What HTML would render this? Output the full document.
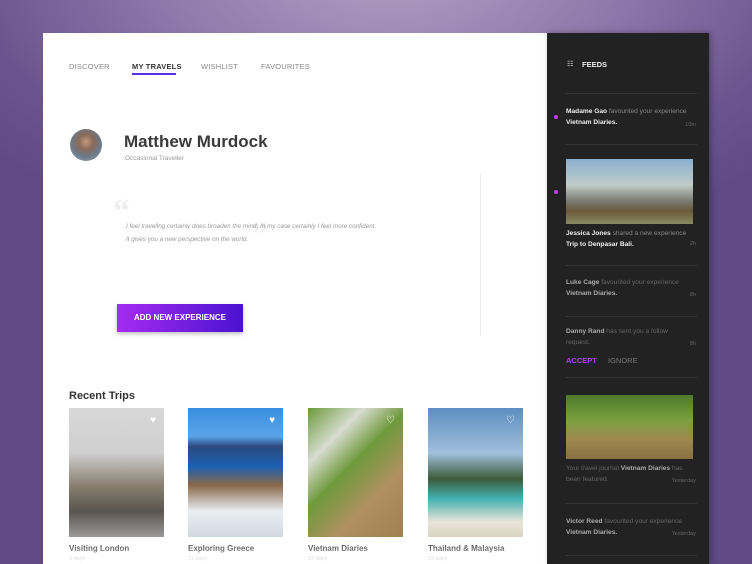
<!DOCTYPE html>
<html><head><meta charset="utf-8"><style>
*{margin:0;padding:0;box-sizing:border-box}
body{width:752px;height:564px;overflow:hidden;position:relative;font-family:"Liberation Sans",sans-serif;
background:radial-gradient(ellipse 520px 300px at 390px -40px,#b4a2c6 0%,#8e79ab 45%,#6a5590 80%,#5f4a86 100%);}
.main{position:absolute;left:43px;top:33px;width:504px;height:531px;background:#fff;}
.nav{position:absolute;top:29px;font-size:7.5px;color:#888;letter-spacing:.2px}
.feed{position:absolute;left:547px;top:33px;width:162px;height:531px;background:#222;box-shadow:2px 0 6px rgba(0,0,0,.3)}
.abs{position:absolute}
.div{position:absolute;left:18px;width:132px;height:1px;background:#333}
.ft{position:absolute;left:19px;font-size:6.6px;line-height:11px;color:#888;width:132px}
.ft b{color:#eee}
.tm{position:absolute;right:13px;font-size:5.5px;color:#666}
.dot{position:absolute;left:7px;width:4px;height:4px;border-radius:50%;background:#c23cf5}
.card{position:absolute;top:408px;width:95px;height:129px}
.ct{position:absolute;top:544px;font-size:8px;font-weight:bold;color:#333}
.cd{position:absolute;top:556px;font-size:5.5px;color:#aaa}
.heart{position:absolute;right:8px;top:7px;color:#fff;font-size:10px}
</style></head><body>
<div class="main">
 <div class="nav" style="left:26px">DISCOVER</div>
 <div class="nav" style="left:89px;color:#333;font-weight:bold">MY TRAVELS</div>
 <div class="abs" style="left:89px;top:40px;width:44px;height:2px;background:#5a2be0"></div>
 <div class="nav" style="left:158px">WISHLIST</div>
 <div class="nav" style="left:218px">FAVOURITES</div>
 <div class="abs" style="left:27px;top:96px;width:32px;height:32px;border-radius:50%;background:radial-gradient(circle at 50% 40%,#c49a80 0,#8a6a58 30%,#6c7a8a 60%,#9aa8b8 100%)"></div>
 <div class="abs" style="left:81px;top:99px;font-size:17px;font-weight:bold;color:#3a3a3a">Matthew Murdock</div>
 <div class="abs" style="left:82px;top:122px;font-size:6.5px;color:#999">Occasional Traveller</div>
 <div class="abs" style="left:437px;top:140px;width:1px;height:163px;background:#eee"></div>
 <div class="abs" style="left:70px;top:160px;font-size:34px;color:#eee;font-family:'Liberation Serif',serif;font-weight:bold">“</div>
 <div class="abs" style="left:208px;top:183px;font-size:34px;color:#eee;font-family:'Liberation Serif',serif;font-weight:bold">”</div>
 <div class="abs" style="left:83px;top:188px;font-size:6.3px;line-height:12.5px;color:#999;font-style:italic">I feel traveling certainly does broaden the mind. In my case certainly I feel more confident.<br>It gives you a new perspective on the world.</div>
 <div class="abs" style="left:74px;top:271px;width:126px;height:28px;background:linear-gradient(90deg,#a52cf0,#4a12d0);box-shadow:0 2px 4px rgba(0,0,0,.25);color:#fff;font-size:8px;font-weight:bold;text-align:center;line-height:28px">ADD NEW EXPERIENCE</div>
 <div class="abs" style="left:26px;top:357px;font-size:11px;font-weight:bold;color:#333">Recent Trips</div>
</div>
<div class="card" style="left:69px;background:linear-gradient(180deg,#d8d8d8 0,#cfcfcf 35%,#8a8070 60%,#5a5550 80%,#9a9a9a 100%)"><span class="heart">♥</span></div>
<div class="card" style="left:188px;background:linear-gradient(180deg,#3a8ee0 0,#5aa4e8 22%,#2c4a80 30%,#1a5fb0 45%,#8a6a4a 60%,#e8eef4 80%,#d0d8e0 100%)"><span class="heart">♥</span></div>
<div class="card" style="left:308px;background:linear-gradient(135deg,#6a9a3a 0,#d8dcd0 25%,#6f9a3c 45%,#b09060 70%,#a08050 100%)"><span class="heart">♡</span></div>
<div class="card" style="left:428px;background:linear-gradient(180deg,#5d8ec0 0,#a0c0dc 35%,#3e5a3a 55%,#40b0b0 70%,#e8e4d8 88%,#dcd4c4 100%)"><span class="heart">♡</span></div>
<div class="ct" style="left:69px">Visiting London</div><div class="cd" style="left:69px">5 days</div>
<div class="ct" style="left:188px">Exploring Greece</div><div class="cd" style="left:188px">11 days</div>
<div class="ct" style="left:308px">Vietnam Diaries</div><div class="cd" style="left:308px">15 days</div>
<div class="ct" style="left:428px">Thailand &amp; Malaysia</div><div class="cd" style="left:428px">19 days</div>
<div class="abs" style="left:43px;top:540px;width:504px;height:24px;background:linear-gradient(180deg,rgba(255,255,255,0),rgba(255,255,255,.8))"></div>

<div class="feed">
 <div class="abs" style="left:20px;top:27px;color:#eee;font-size:7px">☷</div>
 <div class="abs" style="left:35px;top:27px;color:#eee;font-size:7.5px;font-weight:bold">FEEDS</div>
 <div class="div" style="top:60px"></div>
 <div class="dot" style="top:82px"></div>
 <div class="ft" style="top:73px"><b>Madame Gao</b> favourited your experience <b>Vietnam Diaries.</b></div><div class="tm" style="top:89px">10m</div>
 <div class="div" style="top:111px"></div>
 <div class="dot" style="top:157px"></div>
 <div class="abs" style="left:19px;top:126px;width:127px;height:65px;background:linear-gradient(180deg,#8ab0d0 0,#c0ccc8 40%,#7a7a70 65%,#6a5a3a 80%,#8a8a60 100%)"></div>
 <div class="ft" style="top:195px;width:130px"><b>Jessica Jones</b> shared a new experience <b>Trip to Denpasar Bali.</b></div><div class="tm" style="top:208px">2h</div>
 <div class="div" style="top:232px"></div>
 <div class="ft" style="top:244px;color:#666"><b style="color:#aaa">Luke Cage</b> favourited your experience <b style="color:#aaa">Vietnam Diaries.</b></div><div class="tm" style="top:259px">8h</div>
 <div class="div" style="top:283px"></div>
 <div class="ft" style="top:293px;color:#666;width:112px"><b style="color:#aaa">Danny Rand</b> has sent you a follow request.</div><div class="tm" style="top:308px">8h</div>
 <div class="abs" style="left:19px;top:323px;font-size:7.5px;font-weight:bold;color:#b43cf0">ACCEPT</div>
 <div class="abs" style="left:61px;top:323px;font-size:7.5px;color:#777">IGNORE</div>
 <div class="div" style="top:344px"></div>
 <div class="abs" style="left:19px;top:362px;width:127px;height:64px;background:linear-gradient(180deg,#4e7a2a 0,#7aa040 40%,#a08850 70%,#8a7040 100%)"></div>
 <div class="ft" style="top:430px;color:#666;width:125px"><span>Your travel journal </span><b style="color:#aaa">Vietnam Diaries</b> has been featured.</div><div class="tm" style="top:445px">Yesterday</div>
 <div class="div" style="top:470px"></div>
 <div class="ft" style="top:483px;color:#666"><b style="color:#aaa">Victor Reed</b> favourited your experience <b style="color:#aaa">Vietnam Diaries.</b></div><div class="tm" style="top:498px">Yesterday</div>
 <div class="div" style="top:522px"></div>
</div>
</body></html>
